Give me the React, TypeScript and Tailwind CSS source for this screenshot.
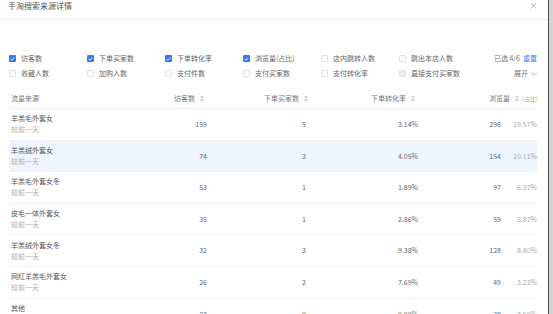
import { ReactNode } from "react";

const filters = [
  { label: "访客数", state: "on" },
  { label: "下单买家数", state: "on" },
  { label: "下单转化率", state: "on" },
  { label: "浏览量(占比)", state: "on" },
  { label: "店内跳转人数", state: "off" },
  { label: "跳出本店人数", state: "off" },
  { label: "收藏人数", state: "off" },
  { label: "加购人数", state: "off" },
  { label: "支付件数", state: "off" },
  { label: "支付买家数", state: "off" },
  { label: "支付转化率", state: "off" },
  { label: "直接支付买家数", state: "disabled" }
];

const rows = [
  { name: "羊羔毛外套女", visitors: 159, buyers: 5, rate: "3.14%", views: 298, share: "19.57%" },
  { name: "羊羔绒外套女", visitors: 74, buyers: 3, rate: "4.05%", views: 154, share: "10.11%", active: true },
  { name: "羊羔毛外套女冬", visitors: 53, buyers: 1, rate: "1.89%", views: 97, share: "6.37%" },
  { name: "皮毛一体外套女", visitors: 35, buyers: 1, rate: "2.86%", views: 59, share: "3.87%" },
  { name: "羊羔绒外套女冬", visitors: 32, buyers: 3, rate: "9.38%", views: 128, share: "8.40%" },
  { name: "网红羊羔毛外套女", visitors: 26, buyers: 2, rate: "7.69%", views: 49, share: "3.22%" },
  { name: "其他", visitors: 22, buyers: 0, rate: "0.00%", views: 38, share: "2.50%" }
];

const cols = "grid grid-cols-[131px_67px_104px_107px_120px]";

export default function App() {
  return (
    <div
      className="flex h-[314px] w-[553px] overflow-hidden bg-[#d6d6d6]"
      style={{ fontFamily: '"Noto Sans CJK SC", "Noto Sans", sans-serif' }}
    >
      <div className="h-full w-[549px] shrink-0 border-r border-[#4a4a4a] bg-white">
        <header className="flex h-[20px] items-start justify-between border-b border-[#ececec] pl-[8px] pr-[10px] pt-[1px]">
          <h1 className="text-[8px] leading-[10px] text-[#555]">手淘搜索来源详情</h1>
          <span className="text-[9px] leading-[10px] text-[#aaa]">×</span>
        </header>

        <div className="mt-[33px] grid grid-cols-[78px_78px_78px_78px_78px_78px_1fr] gap-y-[4px] pl-[9px] pr-[11px]">
          {filters.slice(0, 6).map((f) => (
            <Filter key={f.label} label={f.label} state={f.state} />
          ))}
          <div className="flex h-[11px] items-center justify-end gap-[3px] text-[7px] text-[#777]">
            <span>已选 4/6</span>
            <span className="text-[#3d7eff]">重置</span>
          </div>
          {filters.slice(6).map((f) => (
            <Filter key={f.label} label={f.label} state={f.state} />
          ))}
          <div className="flex h-[11px] items-center justify-end gap-[3px] text-[7px] text-[#777]">
            <span>展开</span>
            <svg width="6" height="4" viewBox="0 0 6 4" fill="none">
              <path d="M0.5 0.8 3 3.2 5.5 0.8" stroke="#999" strokeWidth="0.7" />
            </svg>
          </div>
        </div>

        <div className="mt-[10px] pl-[9px] pr-[11px]">
          <div className={`${cols} h-[20px] items-center border-b border-[#f0f0f0] text-[7px] text-[#777]`}>
            <span className="pl-[2px]">流量来源</span>
            <HeadCell>访客数</HeadCell>
            <HeadCell>下单买家数</HeadCell>
            <HeadCell>下单转化率</HeadCell>
            <div className="flex items-center justify-end">
              <span>浏览量</span>
              <SortIcon />
              <span className="text-[6px] text-[#aaa]">(占比)</span>
            </div>
          </div>
          {rows.map((r) => (
            <div
              key={r.name}
              className={`${cols} h-[31.6px] items-center border-b border-[#f0f0f0] text-[7px] text-[#666] ${r.active ? "bg-[#eef5fe]" : ""}`}
            >
              <div className="flex flex-col pl-[2px] leading-[11px]">
                <span className="text-[#555]">{r.name}</span>
                <span className="text-[#b0b0b0]">较前一天</span>
              </div>
              <span className="text-right">{r.visitors}</span>
              <span className="pr-[5px] text-right">{r.buyers}</span>
              <span className="text-right">{r.rate}</span>
              <div className="flex justify-end">
                <span>{r.views}</span>
                <span className="w-[37px] pr-[1px] text-right text-[#aaa]">{r.share}</span>
              </div>
            </div>
          ))}
        </div>
      </div>
    </div>
  );
}

function HeadCell({ children }: { children: ReactNode }) {
  return (
    <div className="flex items-center justify-end">
      <span>{children}</span>
      <SortIcon />
    </div>
  );
}

function SortIcon() {
  return (
    <svg width="10" height="7" viewBox="0 0 10 7" className="ml-[2px]">
      <path d="M5 0.6 7 2.8 3 2.8Z" fill="#c0c0c0" />
      <path d="M5 6.4 7 4.2 3 4.2Z" fill="#c0c0c0" />
    </svg>
  );
}

function Filter({ label, state }: { label: string; state: string }) {
  return (
    <div className="flex h-[11px] items-center gap-[5px] text-[7px] text-[#666]">
      {state === "on" ? (
        <span className="flex h-[7px] w-[7px] items-center justify-center rounded-[1px] bg-[#3a78f2]">
          <svg width="5" height="4" viewBox="0 0 5 4" fill="none">
            <path d="M0.6 2 2 3.2 4.4 0.7" stroke="white" strokeWidth="0.9" />
          </svg>
        </span>
      ) : state === "disabled" ? (
        <span className="h-[7px] w-[7px] rounded-[1px] border border-[#e0e0e0] bg-[#eeeeee]" />
      ) : (
        <span className="h-[7px] w-[7px] rounded-[1px] border border-[#e0e0e0] bg-white" />
      )}
      <span>{label}</span>
    </div>
  );
}
